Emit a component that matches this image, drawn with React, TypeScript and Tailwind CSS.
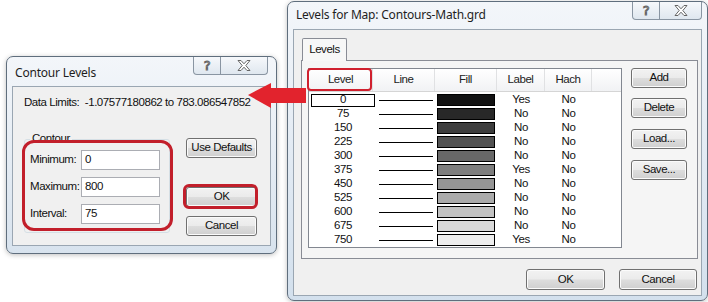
import type { ReactNode } from "react"

const LEVELS = [
  { level: "0", fill: "bg-[#121212]", label: "Yes" },
  { level: "75", fill: "bg-[#282828]", label: "No" },
  { level: "150", fill: "bg-[#3d3d3d]", label: "No" },
  { level: "225", fill: "bg-[#525252]", label: "No" },
  { level: "300", fill: "bg-[#686868]", label: "No" },
  { level: "375", fill: "bg-[#7e7e7e]", label: "Yes" },
  { level: "450", fill: "bg-[#959595]", label: "No" },
  { level: "525", fill: "bg-[#ababab]", label: "No" },
  { level: "600", fill: "bg-[#c2c2c2]", label: "No" },
  { level: "675", fill: "bg-[#d8d8d8]", label: "No" },
  { level: "750", fill: "bg-[#eeeeee]", label: "Yes" },
]

const COLUMNS = [
  { label: "Level", w: "w-[64px]" },
  { label: "Line", w: "w-[62px]" },
  { label: "Fill", w: "w-[62px]" },
  { label: "Label", w: "w-[48px]" },
  { label: "Hach", w: "w-[47px]" },
]

function WinButton({ children, className = "" }: { children: ReactNode; className?: string }) {
  return (
    <div
      className={`flex items-center justify-center rounded-[3px] border border-[#707070] bg-[linear-gradient(#f2f2f2_0%,#ebebeb_48%,#dddddd_52%,#cfcfcf_100%)] shadow-[inset_0_0_0_1px_#fbfbfb] ${className}`}
    >
      {children}
    </div>
  )
}

function CaptionButtons({ xw, className = "" }: { xw: string; className?: string }) {
  return (
    <div className={`flex h-[18px] ${className}`}>
      <div className="flex w-[28px] items-center justify-center rounded-bl-[4px] border border-t-0 border-[#8995a2] bg-[linear-gradient(#f6f8fb,#dfe7ef)]">
        <span className="font-['DejaVu_Sans',sans-serif] text-[13px] leading-none text-white [-webkit-text-stroke:1px_#666]">
          ?
        </span>
      </div>
      <div
        className={`flex ${xw} items-center justify-center rounded-br-[4px] border border-t-0 border-l-0 border-[#8995a2] bg-[linear-gradient(#f6f8fb,#dfe7ef)]`}
      >
        <svg width="14" height="11" viewBox="0 0 14 11">
          <polygon
            points="1,0.5 4,0.5 7,3.8 10,0.5 13,0.5 8.8,5.5 13,10.5 10,10.5 7,7.2 4,10.5 1,10.5 5.2,5.5"
            fill="#fff"
            stroke="#666"
            strokeWidth="1"
            strokeLinejoin="round"
          />
        </svg>
      </div>
    </div>
  )
}

function ContourDialog() {
  return (
    <div className="absolute left-[6px] top-[56px] flex h-[198px] w-[271px] flex-col rounded-[7px] border border-[#5f6e7d] bg-[linear-gradient(#f3f6fa,#d8e3ee)] px-[5px] pb-[7px] shadow-[0_1px_5px_rgba(0,0,0,0.25)]">
      <div className="flex h-[29px] items-start justify-between">
        <span className="pl-[3px] pt-[8px] font-['Noto_Sans',sans-serif] text-[12px] leading-[16px] tracking-[-0.2px] text-[#1e1e1e]">
          Contour Levels
        </span>
        <CaptionButtons xw="w-[47px]" className="mr-[3px]" />
      </div>
      <div className="flex-1 border border-[#9aa6b2] bg-[#f0f0f0] pl-[11px] pt-[8px]">
        <div className="h-[14px] leading-[14px]">Data Limits:&nbsp; -1.07577180862 to 783.086547852</div>
        <div className="mt-[30px] flex">
          <div className="relative flex h-[94px] w-[146px] flex-col gap-[7px] rounded-[3px] border border-[#d5dfe5] pl-[5px] pt-[10px]">
            <span className="absolute -top-[9px] left-[5px] bg-[#f0f0f0] px-[2px] leading-[14px]">Contour</span>
            {[
              ["Minimum:", "0"],
              ["Maximum:", "800"],
              ["Interval:", "75"],
            ].map(([label, value]) => (
              <div key={label} className="flex h-[20px] items-center">
                <span className="w-[51px]">{label}</span>
                <div className="flex h-[20px] w-[79px] items-center border border-[#abadb3] bg-white pl-[3px]">{value}</div>
              </div>
            ))}
            <div className="absolute left-[-3px] top-0 h-[91px] w-[151px] rounded-[12px] border-[3px] border-[#c21f2b]" />
          </div>
          <div className="-mt-[1px] ml-[16px] flex w-[71px] flex-col">
            <WinButton className="h-[20px]">Use Defaults</WinButton>
            <div className="relative mt-[29px]">
              <WinButton className="h-[20px]">OK</WinButton>
              <div className="absolute -left-[3px] -top-[3px] h-[25px] w-[75px] rounded-[6px] border-[3px] border-[#c21f2b]" />
            </div>
            <WinButton className="mt-[9px] h-[20px]">Cancel</WinButton>
          </div>
        </div>
      </div>
    </div>
  )
}

function LevelsList() {
  return (
    <div className="relative h-[180px] w-[314px] border border-[#828790] bg-white">
      <div className="flex h-[23px] border-b border-[#d5d5d5] bg-[linear-gradient(#ffffff,#f1f2f4)] text-[#222]">
        {COLUMNS.map((c) => (
          <div key={c.label} className={`${c.w} flex shrink-0 items-center justify-center border-r border-[#e0e1e3]`}>
            {c.label}
          </div>
        ))}
        <div className="flex-1" />
      </div>
      <div className="pt-[1px]">
        {LEVELS.map((row, i) => (
          <div key={row.level} className="flex h-[14px] items-center">
            <div className="w-[64px] shrink-0">
              <div
                className={`ml-[2px] flex h-[13px] w-[64px] items-center justify-center leading-none ${i === 0 ? "border border-black bg-white" : ""}`}
              >
                {row.level}
              </div>
            </div>
            <div className="w-[62px] shrink-0 pl-[6px]">
              <div className="h-px w-[54px] bg-black" />
            </div>
            <div className="w-[62px] shrink-0 pl-[2px]">
              <div className={`h-[12px] w-[58px] border border-black ${row.fill}`} />
            </div>
            <div className="w-[48px] shrink-0 text-center">{row.label}</div>
            <div className="w-[47px] shrink-0 text-center">No</div>
          </div>
        ))}
      </div>
      <div className="absolute -left-[2px] -top-[1px] h-[23px] w-[65px] rounded-[4px] border-2 border-[#d0202e]" />
    </div>
  )
}

function LevelsDialog() {
  return (
    <div className="absolute left-[287px] top-[1px] flex h-[300px] w-[421px] flex-col rounded-[7px] border border-[#5f6e7d] bg-[linear-gradient(#f3f6fa,#d3e0ed)] px-[5px] pb-[4px] shadow-[0_1px_5px_rgba(0,0,0,0.25)]">
      <div className="flex h-[27px] items-start justify-between">
        <span className="pl-[3px] pt-[5px] font-['Noto_Sans',sans-serif] text-[12px] leading-[16px] tracking-[-0.2px] text-[#1e1e1e]">
          Levels for Map: Contours-Math.grd
        </span>
        <CaptionButtons xw="w-[42px]" />
      </div>
      <div className="flex flex-1 flex-col border border-[#9aa6b2] bg-[#f0f0f0] pl-[7px] pr-[4px] pt-[8px]">
        <div className="relative z-10 ml-[1px] flex h-[23px] w-[45px] items-center justify-center rounded-t-[2px] border border-b-0 border-[#898c95] bg-[#f7f7f7] pb-[1px]">
          Levels
        </div>
        <div className="-mt-[1px] flex h-[199px] w-[397px] border border-[#898c95] bg-[#f5f5f5] pl-[6px] pt-[7px]">
          <LevelsList />
          <div className="ml-[9px] flex w-[56px] flex-col">
            <WinButton className="h-[20px]">Add</WinButton>
            <WinButton className="mt-[10px] h-[20px]">Delete</WinButton>
            <WinButton className="mt-[11px] h-[20px]">Load...</WinButton>
            <WinButton className="mt-[11px] h-[20px]">Save...</WinButton>
          </div>
        </div>
        <div className="mt-[10px] flex justify-end gap-[14px]">
          <WinButton className="h-[21px] w-[79px]">OK</WinButton>
          <WinButton className="h-[21px] w-[78px]">Cancel</WinButton>
        </div>
      </div>
    </div>
  )
}

function RedArrow() {
  return (
    <svg className="absolute left-[246px] top-[80px]" width="62" height="30" viewBox="0 0 62 30">
      <polygon points="2,15 25,3 25,8 60,8 60,23 25,23 25,28" fill="#e2232d" />
    </svg>
  )
}

export default function App() {
  return (
    <div className="relative h-[302px] w-[708px] overflow-hidden bg-white font-['Liberation_Sans',Arial,sans-serif] text-[11.5px] tracking-[-0.45px] text-[#111]">
      <ContourDialog />
      <LevelsDialog />
      <RedArrow />
    </div>
  )
}
